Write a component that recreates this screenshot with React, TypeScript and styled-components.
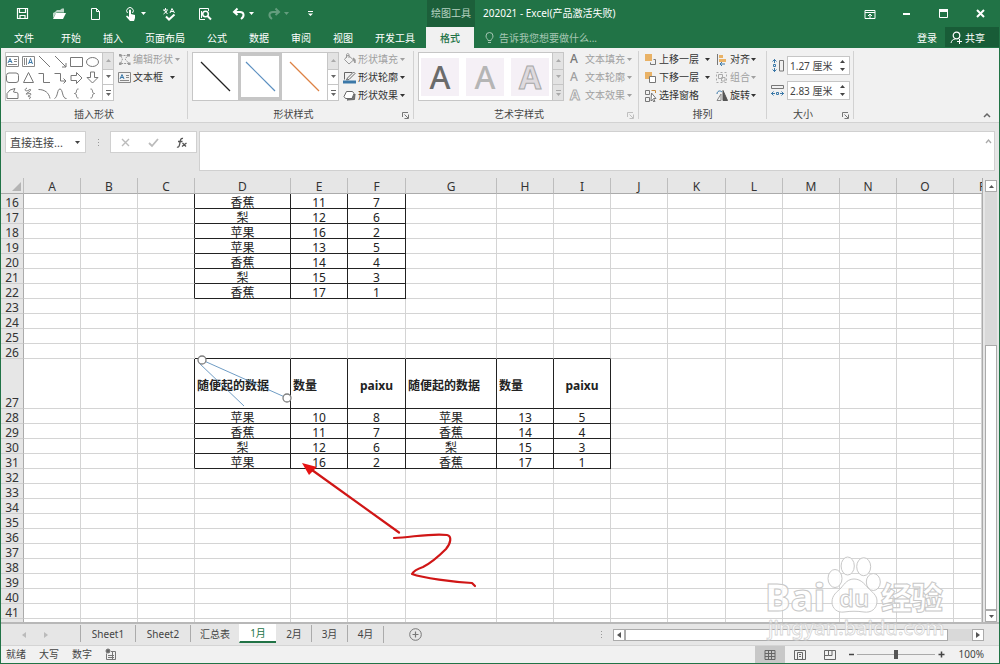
import React from "react";
import styled, { createGlobalStyle } from "styled-components";

const green = "#217346";
const blue = "#3b78a8";

const GlobalStyle = createGlobalStyle`
  * { box-sizing: border-box; }
  body {
    margin: 0;
    font-family: "Noto Sans", "Noto Sans CJK SC", sans-serif;
    font-size: 10px;
    color: #444;
  }
  button, input, textarea { font: inherit; color: inherit; margin: 0; padding: 0; }
  button { border: 0; background: none; white-space: nowrap; }
  svg { display: block; flex: none; }
`;

const Window = styled.div`
  position: relative;
  display: flex;
  flex-direction: column;
  height: 100vh;
  overflow: hidden;
  background: #e6e6e6;
  border: 1px solid ${green};
  border-top: 0;
`;

/* ---------- title bar and menu ---------- */

const TitleBar = styled.header`
  display: flex;
  flex: none;
  height: 27px;
  background: ${green};
  color: #fff;
`;

const QuickAccess = styled.div`
  display: flex;
  flex: none;
  width: 426px;
  padding-left: 3px;
`;

const QuickButton = styled.button<{ $w: number; $dim?: boolean }>`
  display: flex;
  align-items: center;
  justify-content: center;
  gap: 3px;
  width: ${(p) => p.$w}px;
  opacity: ${(p) => (p.$dim ? 0.3 : 1)};
`;

const ContextTitle = styled.div`
  flex: none;
  width: 48px;
  line-height: 27px;
  text-align: center;
  background: #1c5f3a;
  color: #b6d3c2;
`;

const DocTitle = styled.h1`
  flex: 1;
  margin: 0;
  padding-left: 8px;
  font-size: 10px;
  font-weight: 400;
  line-height: 27px;
`;

const WindowButton = styled.button`
  display: flex;
  align-items: center;
  justify-content: center;
  width: 37px;
`;

const MenuBar = styled.nav`
  display: flex;
  flex: none;
  height: 21px;
  background: ${green};
  color: #fff;
`;

const MenuTab = styled.button<{ $active?: boolean; $pad?: string }>`
  padding: ${(p) => p.$pad || "0 11px"};
  line-height: 20px;
  background: ${(p) => (p.$active ? "#f1f1f1" : "transparent")};
  color: ${(p) => (p.$active ? green : "#fff")};
  font-weight: ${(p) => (p.$active ? 500 : 400)};
`;

const TellMe = styled.label`
  display: flex;
  flex: 1;
  align-items: center;
  gap: 5px;
  padding-left: 11px;
`;

const TellMeInput = styled.input`
  width: 160px;
  border: 0;
  background: none;
  &::placeholder { color: #a6c7b4; opacity: 1; }
`;

const ShareButton = styled.button`
  display: flex;
  align-items: center;
  gap: 2px;
  width: 54px;
  height: 20px;
  padding-left: 5px;
  background: #185c37;
`;

/* ---------- ribbon ---------- */

const Ribbon = styled.section`
  display: flex;
  flex: none;
  height: 75px;
  background: #f1f1f1;
  border-bottom: 1px solid #d2d2d2;
`;

const Group = styled.div<{ $w: number }>`
  display: flex;
  flex: none;
  flex-direction: column;
  width: ${(p) => p.$w}px;
  padding-top: 2px;
`;

const Divider = styled.div`
  flex: none;
  width: 1px;
  height: 68px;
  margin-top: 3px;
  background: #d2d2d2;
`;

const GroupBody = styled.div`
  display: flex;
  flex: none;
  height: 56px;
  padding-left: 4px;
`;

const GroupFooter = styled.div`
  display: flex;
  align-items: center;
  height: 16px;
`;

const GroupName = styled.span`
  flex: 1;
  text-align: center;
  line-height: 16px;
`;

const Launcher = styled.button<{ $dim?: boolean }>`
  width: 14px;
  height: 10px;
  padding-left: 2px;
  opacity: ${(p) => (p.$dim ? 0.4 : 1)};
`;

const Gallery = styled.div<{ $w: number }>`
  display: flex;
  flex: none;
  width: ${(p) => p.$w}px;
  height: 49px;
  margin-top: 2px;
  background: #fff;
  border: 1px solid #c6c6c6;
`;

const GalleryItems = styled.div`
  display: flex;
  flex: 1;
`;

const ShapeGrid = styled.div`
  display: grid;
  flex: 1;
  grid-template-columns: repeat(6, 16px);
  grid-template-rows: repeat(3, 16px);
`;

const ShapeButton = styled.button`
  display: flex;
  align-items: center;
`;

const GalleryScroll = styled.div`
  display: grid;
  width: 11px;
  grid-template-rows: repeat(3, 1fr);
`;

const ScrollStep = styled.button<{ $off?: boolean }>`
  display: flex;
  align-items: center;
  justify-content: center;
  border-left: 1px solid #c6c6c6;
  background: ${(p) => (p.$off ? "#e3e3e3" : "#fff")};
  color: ${(p) => (p.$off ? "#aaa" : "#666")};
  & + & { border-top: 1px solid #c6c6c6; }
`;

const LineStyle = styled.button<{ $selected?: boolean }>`
  display: flex;
  flex: 1;
  align-items: center;
  justify-content: center;
  border: 3px solid ${(p) => (p.$selected ? "#c6c6c6" : "transparent")};
`;

const WordArtRow = styled(GalleryItems)`
  align-items: center;
  gap: 7px;
  padding-left: 2px;
`;

const WordArtTile = styled.button`
  display: flex;
  align-items: center;
  justify-content: center;
  width: 38px;
  height: 38px;
  background: #f5f0f6;
`;

const LetterA = styled.span<{ $size: number; $fill: string; $stroke?: string; $bold?: boolean }>`
  font-size: ${(p) => p.$size}px;
  line-height: 1;
  font-weight: ${(p) => (p.$bold ? 700 : 500)};
  color: ${(p) => p.$fill};
  -webkit-text-stroke: ${(p) => (p.$stroke ? `1px ${p.$stroke}` : "0")};
`;

const CommandList = styled.div<{ $w: number; $left: number }>`
  display: flex;
  flex: none;
  flex-direction: column;
  width: ${(p) => p.$w}px;
  margin-left: ${(p) => p.$left}px;
`;

const CommandButton = styled.button<{ $off?: boolean; $w?: number }>`
  display: flex;
  align-items: center;
  width: ${(p) => (p.$w ? `${p.$w}px` : "auto")};
  height: 18px;
  line-height: 18px;
  color: ${(p) => (p.$off ? "#a0a0a0" : "#333")};
`;

const CommandIcon = styled.span`
  display: flex;
  justify-content: flex-start;
  width: 14px;
  margin-right: 1px;
`;

const CommandText = styled.span`
  flex: 1;
  text-align: left;
`;

const SizeFields = styled.div`
  display: flex;
  flex-direction: column;
  gap: 6px;
  padding-top: 6px;
`;

const SizeField = styled.label`
  display: flex;
  align-items: center;
  gap: 3px;
  height: 19px;
`;

const SizeBox = styled.span`
  display: flex;
  align-items: center;
  width: 63px;
  height: 19px;
  background: #fff;
  border: 1px solid #c6c6c6;
`;

const SizeInput = styled.input`
  flex: 1;
  min-width: 0;
  padding-left: 2px;
  border: 0;
  background: none;
`;

const Spinner = styled.span`
  display: flex;
  flex-direction: column;
  gap: 4px;
  width: 9px;
`;

const SpinButton = styled.button`
  display: block;
  width: 6px;
  height: 4px;
`;

const RibbonEnd = styled.div`
  display: flex;
  flex: 1;
  align-items: flex-end;
  justify-content: flex-end;
  padding: 0 8px 2px 0;
`;

/* ---------- formula bar ---------- */

const FormulaBar = styled.section`
  display: flex;
  flex: none;
  height: 55px;
  padding: 8px 4px 7px 4px;
`;

const NameBox = styled.div`
  display: flex;
  align-items: center;
  width: 81px;
  height: 22px;
  padding: 0 5px 0 4px;
  background: #fff;
  border: 1px solid #d0d0d0;
`;

const NameInput = styled.input`
  flex: 1;
  min-width: 0;
  border: 0;
  font-size: 11px;
`;

const Grip = styled.div`
  display: flex;
  flex-direction: column;
  align-items: center;
  justify-content: center;
  gap: 2px;
  width: 24px;
  height: 22px;
  &::before, &::after { content: ""; width: 1px; height: 1px; background: #999; }
`;

const GripDot = styled.i`
  width: 1px;
  height: 1px;
  background: #999;
`;

const FormulaButtons = styled.div`
  display: flex;
  flex: none;
  width: 87px;
  height: 22px;
  background: #fff;
  border: 1px solid #d0d0d0;
`;

const FormulaButton = styled.button`
  display: flex;
  flex: 1;
  align-items: center;
  justify-content: center;
`;

const FormulaField = styled.div`
  display: flex;
  flex: 1;
  height: 40px;
  margin-left: 2px;
  padding: 6px 2px 0 0;
  background: #fff;
  border: 1px solid #d0d0d0;
`;

const FormulaInput = styled.textarea`
  flex: 1;
  height: 30px;
  border: 0;
  resize: none;
  font-size: 12px;
`;

/* ---------- sheet ---------- */

const Workspace = styled.main`
  display: flex;
  flex: 1;
  min-height: 0;
`;

const SheetView = styled.div`
  position: relative;
  flex: 1;
  overflow: hidden;
  border-right: 1px solid #ababab;
`;

const Grid = styled.table`
  width: 100%;
  table-layout: fixed;
  border-collapse: separate;
  border-spacing: 0;
  font-size: 12px;
  line-height: 11px;
  background: #fff;
`;

const HeadRow = styled.tr`
  height: 16px;
`;

const ColHead = styled.th`
  height: 16px;
  padding: 2px 0 0;
  font-weight: 400;
  color: #333;
  background: #e6e6e6;
  border-right: 1px solid #bdbdbd;
  border-bottom: 1px solid #ababab;
  white-space: nowrap;
`;

const CornerHead = styled(ColHead)`
  padding-left: 10px;
`;

const EdgeHead = styled(ColHead)`
  padding-left: 25px;
  text-align: left;
  border-right: 0;
`;

const RowHead = styled.th<{ $h: number }>`
  height: ${(p) => p.$h}px;
  padding: 3px 0 0;
  font-weight: 400;
  vertical-align: bottom;
  color: #333;
  background: #e6e6e6;
  border-right: 1px solid #ababab;
  border-bottom: 1px solid #cfcfcf;
`;

const Cell = styled.td<{ $right: boolean; $bottom: boolean; $bold?: boolean; $align?: string }>`
  padding: 3px 2px 0;
  white-space: nowrap;
  color: #222;
  text-align: ${(p) => p.$align || "center"};
  vertical-align: middle;
  font-weight: ${(p) => (p.$bold ? 700 : 400)};
  border-right: 1px solid ${(p) => (p.$right ? "#222" : "#d4d4d4")};
  border-bottom: 1px solid ${(p) => (p.$bottom ? "#222" : "#d4d4d4")};
`;

const Drawing = styled.svg`
  position: absolute;
  top: 0;
  left: 0;
  pointer-events: none;
`;

const VScroll = styled.div`
  display: flex;
  flex: none;
  flex-direction: column;
  width: 16px;
  padding: 2px 2px 0;
`;

const ArrowButton = styled.button`
  display: flex;
  flex: none;
  align-items: center;
  justify-content: center;
  width: 12px;
  height: 12px;
  background: #fff;
  border: 1px solid #ababab;
  color: #555;
`;

const VTrack = styled.div`
  flex: 154;
  background: #d9d9d9;
`;

const VThumb = styled.div`
  flex: 266;
  background: #fff;
  border: 1px solid #ababab;
`;

/* ---------- sheet tabs ---------- */

const TabBar = styled.section`
  display: flex;
  flex: none;
  align-items: center;
  height: 24px;
  border-top: 2px solid #b8b8b8;
  border-bottom: 1px solid #d4d4d4;
`;

const TabNav = styled.div`
  display: flex;
  align-items: center;
  gap: 18px;
  width: 79px;
  padding-left: 21px;
`;

const NavButton = styled.button`
  display: flex;
  color: #bbb;
`;

const SheetTabs = styled.div`
  display: flex;
  align-self: flex-start;
  height: 19px;
  padding-top: 1px;
`;

const SheetTab = styled.button<{ $w: number; $active?: boolean; $plainLeft?: boolean }>`
  width: ${(p) => p.$w}px;
  height: ${(p) => (p.$active ? 19 : 17)}px;
  margin-top: ${(p) => (p.$active ? -1 : 0)}px;
  line-height: 16px;
  background: ${(p) => (p.$active ? "#fff" : "transparent")};
  color: ${(p) => (p.$active ? green : "#444")};
  border-left: 1px solid ${(p) => (p.$active || p.$plainLeft ? "transparent" : "#ababab")};
  border-bottom: ${(p) => (p.$active ? `2px solid ${green}` : "0")};
`;

const TabEnd = styled.div`
  flex: 1;
  padding-left: 25px;
  height: 17px;
  border-left: 1px solid #ababab;
`;

const AddSheet = styled.button`
  display: flex;
  padding-top: 2px;
`;

const HScroll = styled.div`
  display: flex;
  flex: none;
  width: 371px;
  height: 12px;
  margin-right: 15px;
`;

const HThumb = styled.div`
  flex: 322;
  background: #fff;
  border: 1px solid #ababab;
`;

const HTrack = styled.div`
  flex: 24;
  background: #d9d9d9;
`;

/* ---------- status bar ---------- */

const StatusBar = styled.footer`
  display: flex;
  flex: none;
  align-items: center;
  height: 17px;
  padding: 0 15px 0 5px;
  background: #f1f1f1;
`;

const StatusItems = styled.div`
  display: flex;
  flex: 1;
  align-items: center;
  gap: 13px;
  line-height: 14px;
  padding-bottom: 2px;
`;

const ViewButton = styled.button<{ $active?: boolean }>`
  display: flex;
  align-items: center;
  justify-content: center;
  width: 30px;
  height: 17px;
  background: ${(p) => (p.$active ? "#c8c8c8" : "transparent")};
`;

const ZoomButton = styled.button`
  display: flex;
  align-items: center;
  justify-content: center;
  width: 12px;
  height: 16px;
`;

const ZoomSlider = styled.input`
  appearance: none;
  width: 78px;
  height: 16px;
  background: linear-gradient(#aaa, #aaa) center / 100% 1px no-repeat;
  &::-webkit-slider-thumb {
    appearance: none;
    width: 4px;
    height: 9px;
    background: #555;
  }
`;

const ZoomValue = styled.span`
  width: 37px;
  line-height: 14px;
  padding-bottom: 2px;
  text-align: right;
`;

const Watermark = styled.svg`
  position: absolute;
  right: 51px;
  bottom: 22px;
  pointer-events: none;
`;

/* ---------- glyphs ---------- */

const Glyph = ({ d, s = 13, c = "currentColor", w = 1, fill = "none", children }: {
  d?: string; s?: number; c?: string; w?: number; fill?: string; children?: React.ReactNode;
}) => (
  <svg width={s} height={s} viewBox={`0 0 ${s} ${s}`} fill={fill} stroke={c} strokeWidth={w} aria-hidden="true">
    {d && <path d={d} />}
    {children}
  </svg>
);

const Caret = ({ up }: { up?: boolean }) => (
  <svg width="5" height="3" viewBox="0 0 5 3" fill="currentColor" aria-hidden="true">
    <path d={up ? "M0 3L2.5 0L5 3Z" : "M0 0H5L2.5 3Z"} />
  </svg>
);

const SideCaret = ({ left }: { left?: boolean }) => (
  <svg width="4" height="6" viewBox="0 0 4 6" fill="currentColor" aria-hidden="true">
    <path d={left ? "M4 0V6L0 3Z" : "M0 0V6L4 3Z"} />
  </svg>
);

const MoreCaret = () => (
  <svg width="7" height="6" viewBox="0 0 7 6" fill="currentColor" aria-hidden="true">
    <path d="M1 0H6V1H1ZM1 3H6L3.5 6Z" />
  </svg>
);

const TextBoxGlyph = ({ vertical }: { vertical?: boolean }) => (
  <Glyph c="#888">
    <path d="M.5 1.5H12.5V11.5H.5Z" />
    {vertical ? (
      <>
        <path d="M2.5 3V10M4.5 3V10" />
        <path d="M6.5 9L8.5 3.5L10.5 9M7 7.5H10" stroke={blue} />
      </>
    ) : (
      <>
        <path d="M2 8L4 3.5L6 8M3 6.5H5.5" stroke={blue} />
        <path d="M8 4.5H11M8 6.5H11M2 9.5H11" />
      </>
    )}
  </Glyph>
);

const shapes: [string, React.ReactNode][] = [
  ["文本框", <TextBoxGlyph />],
  ["竖排文本框", <TextBoxGlyph vertical />],
  ["直线", <Glyph c="#777" d="M1 1L12 12" />],
  ["箭头", <Glyph c="#777" d="M1 1L12 12M12 8V12H8" />],
  ["矩形", <Glyph c="#777" d="M.5 2.5H12.5V11.5H.5Z" />],
  ["椭圆", <Glyph c="#777"><ellipse cx="6.5" cy="7" rx="6" ry="4.5" /></Glyph>],
  ["圆角矩形", <Glyph c="#777"><rect x=".5" y="2" width="12" height="9.5" rx="2.5" /></Glyph>],
  ["三角形", <Glyph c="#777" d="M6.5 1.5L11.5 11.5H1.5Z" />],
  ["肘形连接符", <Glyph c="#777" d="M.5 2.5H5.5V11.5H12" />],
  ["肘形箭头", <Glyph c="#777" d="M.5 2.5H6.5V10H12M9.5 7.5L12 10L9.5 12.5" />],
  ["右箭头", <Glyph c="#777" d="M1 4.5H6.5V1.5L12 7L6.5 12.5V9.5H1Z" />],
  ["下箭头", <Glyph c="#777" d="M4.5 1H8.5V6.5H12L6.5 12L1 6.5H4.5Z" />],
  ["任意多边形", <Glyph c="#777" d="M4 3L9 1.5L7.5 5C9 6 12 4.5 12 7V11.5H1V6.5Z" />],
  ["自由曲线", <Glyph c="#777" d="M5 1C1 3 4 5 7 3C9 1 10 4 5 6C2 9 8 5 9 7C9 9 4 8 7 10C9 9 9 11 7 12" />],
  ["弧形", <Glyph c="#777" d="M.5 2.5C7 2.5 11 6 12 11.5" />],
  ["曲线", <Glyph c="#777" d="M.5 11.5C4 10 3 2 6 2C9 2 8 12 12.5 11.5" />],
  ["左大括号", <Glyph c="#777" d="M8.5 2C5 2 8 6 4.5 6.5C8 7 5 11 8.5 11" />],
  ["右大括号", <Glyph c="#777" d="M4.5 2C8 2 5 6 8.5 6.5C5 7 8 11 4.5 11" />],
];

const Steps = ({ off }: { off?: boolean }) => (
  <GalleryScroll>
    <ScrollStep $off aria-label="上一行"><Caret up /></ScrollStep>
    <ScrollStep $off={off} aria-label="下一行"><Caret /></ScrollStep>
    <ScrollStep $off={off} aria-label="其他"><MoreCaret /></ScrollStep>
  </GalleryScroll>
);

const Command = ({ icon, text, off, w, caret = true }: {
  icon: React.ReactNode; text: string; off?: boolean; w?: number; caret?: boolean;
}) => (
  <CommandButton $off={off} $w={w}>
    <CommandIcon>{icon}</CommandIcon>
    <CommandText>{text}</CommandText>
    {caret && <Caret />}
  </CommandButton>
);

const Footer = ({ name, launcher, dim }: { name: string; launcher?: boolean; dim?: boolean }) => (
  <GroupFooter>
    <GroupName>{name}</GroupName>
    {launcher && (
      <Launcher $dim={dim} aria-label={`${name}设置`}>
        <Glyph s={9} c="#777" d="M1.5 7V2.5H7M3.5 4.5L7 8M7.5 4.5V8.5H3.5" />
      </Launcher>
    )}
  </GroupFooter>
);

const SizeControl = ({ icon, name, value }: { icon: React.ReactNode; name: string; value: string }) => (
  <SizeField>
    {icon}
    <SizeBox>
      <SizeInput defaultValue={value} aria-label={name} />
      <Spinner>
        <SpinButton aria-label={`增大${name}`}><Caret up /></SpinButton>
        <SpinButton aria-label={`减小${name}`}><Caret /></SpinButton>
      </Spinner>
    </SizeBox>
  </SizeField>
);

/* ---------- sheet data ---------- */

const columns = "ABCDEFGHIJKLMNO".split("");
const columnWidths = [57, 57, 57, 96, 57, 58, 91, 57, 57, 57, 58, 57, 57, 57, 57];
const firstRow = 16;
const lastRow = 41;

const data: Record<number, string[]> = {
  16: ["香蕉", "11", "7"],
  17: ["梨", "12", "6"],
  18: ["苹果", "16", "2"],
  19: ["苹果", "13", "5"],
  20: ["香蕉", "14", "4"],
  21: ["梨", "15", "3"],
  22: ["香蕉", "17", "1"],
  27: ["随便起的数据", "数量", "paixu", "随便起的数据", "数量", "paixu"],
  28: ["苹果", "10", "8", "苹果", "13", "5"],
  29: ["香蕉", "11", "7", "香蕉", "14", "4"],
  30: ["梨", "12", "6", "梨", "15", "3"],
  31: ["苹果", "16", "2", "香蕉", "17", "1"],
};

const cellAt = (row: number, col: number): string | undefined => data[row]?.[col - 3];
const rows = Array.from({ length: lastRow - firstRow + 2 }, (_, i) => firstRow + i);

const SheetRow = ({ row }: { row: number }) => (
  <tr>
    <RowHead scope="row" $h={row === 27 ? 50 : 15}>{row <= lastRow ? row : null}</RowHead>
    {[...columns, "P"].map((name, col) => {
      const text = cellAt(row, col);
      return (
        <Cell
          key={name}
          $right={text !== undefined || cellAt(row, col + 1) !== undefined}
          $bottom={text !== undefined || cellAt(row + 1, col) !== undefined}
          $bold={row === 27}
          $align={row === 27 && text !== "paixu" ? "left" : "center"}
        >
          {text}
        </Cell>
      );
    })}
  </tr>
);

const menuTabs = ["开始", "插入", "页面布局", "公式", "数据", "审阅", "视图", "开发工具"];
const orange = "#e9b266";
const layerFront = <Glyph><path d="M1 1H8V8H1Z" fill={orange} stroke="none" /><path d="M9.5 6.5H11.5V11.5H6.5V9.5" stroke="#777" /></Glyph>;
const layerBack = <Glyph><path d="M1 1H8V8H1Z" fill={orange} stroke="none" /><path d="M5.5 5.5H11.5V11.5H5.5Z" stroke="#777" fill="#fff" /></Glyph>;

export default function App() {
  return (
    <Window>
      <GlobalStyle />
      <TitleBar>
        <QuickAccess>
          <QuickButton $w={36} aria-label="保存">
            <Glyph c="#fff" d="M1.5 1.5H11.5V11.5H1.5ZM3.5 2V5.5H9.5V2M4 11V8.5H9V11" w={1.2} />
          </QuickButton>
          <QuickButton $w={38} aria-label="打开">
            <Glyph c="none" fill="#fff" s={14}><path d="M3 5L5 3H8L10 1.5H12V5.5H4.5L1 11V6Z" opacity=".7" /><path d="M4 6H14L11 12H1Z" /></Glyph>
          </QuickButton>
          <QuickButton $w={34} aria-label="新建">
            <Glyph c="#fff" d="M2.5 1.5H7.5L10.5 4.5V12.5H2.5ZM7.5 1.5V4.5H10.5" />
          </QuickButton>
          <QuickButton $w={46} aria-label="触摸/鼠标模式">
            <Glyph s={14} c="none" fill="#fff">
              <path d="M5 3.5A1 1 0 0 1 7 3.5V7L11 8V11L10 14H6L2 9.5L3 8.5L5 10Z" />
              <path d="M3.5 6A3.3 3.3 0 1 1 8.5 6" stroke="#fff" fill="none" />
            </Glyph>
            <Caret />
          </QuickButton>
          <QuickButton $w={22} aria-label="拼写检查">
            <Glyph s={14} c="#fff" d="M1 3H6M3.5 1V3M2 3L5.5 7M5 4L1.5 7M8 6L10 1.5L12.5 6M9 4.5H12">
              <path d="M4 9.5L7 12.5L12.5 7.5" strokeWidth="2" />
            </Glyph>
          </QuickButton>
          <QuickButton $w={50} aria-label="打印预览">
            <Glyph s={14} c="#fff" d="M10.5 4V1.5H1.5V12.5H7M3.5 4V11">
              <circle cx="7.5" cy="7" r="2.8" strokeWidth="1.5" />
              <path d="M9.5 9L13 12.5" strokeWidth="2" />
            </Glyph>
          </QuickButton>
          <QuickButton $w={26} aria-label="撤消">
            <Glyph s={14} c="#fff" d="M5.5 1.5L2 5L5.5 8M2.5 5H8C12 5 13 9 9 12" w={2} />
            <Caret />
          </QuickButton>
          <QuickButton $w={44} $dim aria-label="恢复">
            <Glyph s={14} c="#fff" d="M8.5 1.5L12 5L8.5 8M11.5 5H6C2 5 1 9 5 12" w={2} />
            <Caret />
          </QuickButton>
          <QuickButton $w={20} aria-label="自定义快速访问工具栏">
            <Glyph s={7} c="none" fill="#fff" d="M1 1H6V2H1ZM1 3.5H6L3.5 6Z" />
          </QuickButton>
        </QuickAccess>
        <ContextTitle>绘图工具</ContextTitle>
        <DocTitle>202021 - Excel(产品激活失败)</DocTitle>
        <WindowButton aria-label="功能区显示选项">
          <Glyph s={12} c="#fff" d="M1 2.5H11V10.5H1ZM1 4.5H11M6 10V6M4 8L6 6L8 8" />
        </WindowButton>
        <WindowButton aria-label="最小化"><Glyph s={9} c="#fff" d="M1 5H8" w={2} /></WindowButton>
        <WindowButton aria-label="最大化"><Glyph s={9} c="#fff" d="M.5 1V8.5H8.5V1"><path d="M0 1.5H9" strokeWidth="3" /></Glyph></WindowButton>
        <WindowButton aria-label="关闭"><Glyph s={9} c="#fff" d="M1 1L8 8M8 1L1 8" w={2} /></WindowButton>
      </TitleBar>

      <MenuBar>
        <MenuTab $pad="0 16px 0 13px">文件</MenuTab>
        {menuTabs.map((name) => <MenuTab key={name}>{name}</MenuTab>)}
        <MenuTab $active $pad="0 14px">格式</MenuTab>
        <TellMe>
          <svg width="9" height="12" viewBox="0 0 9 12" fill="none" stroke="#a6c7b4" aria-hidden="true">
            <path d="M3 8.5C3 7 1 6.5 1 4A3.5 3.5 0 0 1 8 4C8 6.5 6 7 6 8.5ZM3 10.5H6" />
          </svg>
          <TellMeInput placeholder="告诉我您想要做什么..." aria-label="操作说明搜索" />
        </TellMe>
        <MenuTab $pad="0 8px">登录</MenuTab>
        <ShareButton>
          <Glyph c="#fff" d="M1 12C1.5 9.5 3 8 5.5 8M9.5 8V13M7 10.5H12">
            <circle cx="6.5" cy="4.5" r="3.3" strokeWidth="1.2" />
          </Glyph>
          共享
        </ShareButton>
      </MenuBar>

      <Ribbon>
        <Group $w={186}>
          <GroupBody>
            <Gallery $w={109}>
              <ShapeGrid>
                {shapes.map(([name, glyph]) => <ShapeButton key={name} aria-label={name}>{glyph}</ShapeButton>)}
              </ShapeGrid>
              <Steps />
            </Gallery>
            <CommandList $w={62} $left={4}>
              <Command off text="编辑形状" icon={
                <Glyph c="#999"><path d="M2.5 2.5H10L7 6L11 10.5H2.5L4.5 6Z" strokeDasharray="2 1" /><path d="M1 1H3.5V3.5H1ZM9 1H12V3.5H9ZM1 9.5H3.5V12H1ZM10 9.5H12.5V12H10Z" fill="#999" stroke="none" /></Glyph>
              } />
              <Command w={57} text="文本框" icon={<TextBoxGlyph />} />
            </CommandList>
          </GroupBody>
          <Footer name="插入形状" />
        </Group>
        <Divider />
        <Group $w={225}>
          <GroupBody>
            <Gallery $w={147}>
              <GalleryItems>
                {["#222", "#5b8fc0", "#dd8244"].map((color, i) => (
                  <LineStyle key={color} $selected={i === 1} aria-label={`线条样式 ${i + 1}`}>
                    <Glyph s={31} c={color} d="M1 1L30 30" w={1.2} />
                  </LineStyle>
                ))}
              </GalleryItems>
              <Steps />
            </Gallery>
            <CommandList $w={62} $left={4}>
              <Command off text="形状填充" icon={
                <Glyph c="#999" d="M5 2L10.5 7L6 11L1.5 6.5ZM3.5 5V2C3.5 0 6 0 6 2V5"><path d="M10.5 5C12.5 6 12.5 8 12 10L10.5 7Z" fill="#999" /></Glyph>
              } />
              <Command text="形状轮廓" icon={
                <Glyph c="#666" d="M9 1.5H1.5V8.5M4.5 7L10.5 1L12 2.5L6 8.5L3.5 9Z"><path d="M0 11H13" stroke={blue} strokeWidth="3" /></Glyph>
              } />
              <Command text="形状效果" icon={
                <Glyph c="#666"><path d="M4 11L11.5 10.5L12 5L10 8Z" fill="#777" /><path d="M3.5 2.5H9.5L11 4.5L9 9.5H2.5L1 7.5Z" fill="#fff" strokeLinejoin="round" /></Glyph>
              } />
            </CommandList>
          </GroupBody>
          <Footer name="形状样式" launcher />
        </Group>
        <Divider />
        <Group $w={224}>
          <GroupBody>
            <Gallery $w={146}>
              <WordArtRow>
                <WordArtTile aria-label="艺术字样式 1"><LetterA $size={32} $fill="#6b6b6b">A</LetterA></WordArtTile>
                <WordArtTile aria-label="艺术字样式 2"><LetterA $size={32} $fill="#b5b5b5">A</LetterA></WordArtTile>
                <WordArtTile aria-label="艺术字样式 3"><LetterA $size={32} $bold $fill="#dedade" $stroke="#a8a8a8">A</LetterA></WordArtTile>
              </WordArtRow>
              <Steps off />
            </Gallery>
            <CommandList $w={62} $left={6}>
              <Command off text="文本填充" icon={<LetterA $size={12} $fill="#777">A</LetterA>} />
              <Command off text="文本轮廓" icon={<LetterA $size={12} $fill="#a0a0a0">A</LetterA>} />
              <Command off text="文本效果" icon={<LetterA $size={14} $bold $fill="#fff" $stroke="#aaa">A</LetterA>} />
            </CommandList>
          </GroupBody>
          <Footer name="艺术字样式" launcher dim />
        </Group>
        <Divider />
        <Group $w={127}>
          <GroupBody>
            <CommandList $w={66} $left={1}>
              <Command text="上移一层" icon={layerFront} />
              <Command text="下移一层" icon={layerBack} />
              <Command text="选择窗格" caret={false} icon={
                <Glyph c="#777" d="M1.5 1.5H5.5V5.5H1.5ZM1.5 8.5H5.5V12.5H1.5Z"><path d="M7.5 1.5H11.5V4" stroke="#c98b3a" /><path d="M7.5 4L12 9.5H9.5L11 12.5L9.8 13L8.5 10.5L7 12Z" fill="#fff" /></Glyph>
              } />
            </CommandList>
            <CommandList $w={41} $left={5}>
              <Command text="对齐" icon={
                <Glyph><path d="M2.5 1V12" stroke="#777" /><path d="M4 2H8V5H4ZM4 6H11V9H4Z" fill={orange} stroke="none" /><path d="M10 11H5M7 9L5 11L7 13" stroke={blue} /></Glyph>
              } />
              <Command off text="组合" icon={
                <Glyph c="#aaa"><path d="M1.5 1.5H11.5V11.5H1.5Z" strokeDasharray="2 2" /><path d="M3.5 3.5H7.5V7.5H3.5ZM6.5 6.5H10V10H6.5Z" /></Glyph>
              } />
              <Command text="旋转" icon={
                <Glyph><path d="M8 1.5V11.5H12.5Z" fill="#555" stroke="#555" /><path d="M6 5V11.5H2Z" stroke="#888" /><path d="M2 5C2 2 5 1 7 3" stroke={blue} /></Glyph>
              } />
            </CommandList>
          </GroupBody>
          <Footer name="排列" />
        </Group>
        <Divider />
        <Group $w={86}>
          <GroupBody>
            <SizeFields>
              <SizeControl name="高度" value="1.27 厘米" icon={
                <Glyph c={blue} d="M3.5 0V4M1.5 2.5L3.5 .5L5.5 2.5M3.5 9V13M1.5 10.5L3.5 12.5L5.5 10.5M2.5 5.5H4.5V7.5H2.5Z"><path d="M8.5 1.5H12.5V12H8.5Z" stroke="#777" /></Glyph>
              } />
              <SizeControl name="宽度" value="2.83 厘米" icon={
                <Glyph c={blue} d="M0 9.5H4M2.5 7.5L.5 9.5L2.5 11.5M9 9.5H13M10.5 7.5L12.5 9.5L10.5 11.5M5.5 8.5H7.5V10.5H5.5Z"><path d="M.5 1.5H12.5V4.5H.5Z" stroke="#777" /></Glyph>
              } />
            </SizeFields>
          </GroupBody>
          <Footer name="大小" launcher />
        </Group>
        <Divider />
        <RibbonEnd>
          <button aria-label="折叠功能区"><Glyph s={8} c="#666" d="M1 5L4 2L7 5" w={1.5} /></button>
        </RibbonEnd>
      </Ribbon>

      <FormulaBar>
        <NameBox>
          <NameInput defaultValue="直接连接..." aria-label="名称框" />
          <button aria-label="名称列表"><Caret /></button>
        </NameBox>
        <Grip><GripDot /></Grip>
        <FormulaButtons>
          <FormulaButton aria-label="取消"><Glyph s={9} c="#bbb" d="M1 1L8 8M8 1L1 8" w={1.4} /></FormulaButton>
          <FormulaButton aria-label="输入"><Glyph s={11} c="#bbb" d="M1 6L4 9L10 2" w={1.8} /></FormulaButton>
          <FormulaButton aria-label="插入函数">
            <Glyph s={13} c="#555" d="M2 11C4 12 4.5 9 5 6.5C5.5 3.5 6 2 8 2.5M3 5.5H7.5M7.5 7L11 10.5M11.5 7L7 10.5" w={1.3} />
          </FormulaButton>
        </FormulaButtons>
        <FormulaField>
          <FormulaInput aria-label="编辑栏" />
          <Glyph s={7} c="#aaa" d="M1 5L3.5 2L6 5" w={1.3} />
        </FormulaField>
      </FormulaBar>

      <Workspace>
        <SheetView>
          <Grid>
            <colgroup>
              <col width={23} />
              {columnWidths.map((w, i) => <col key={columns[i]} width={w} />)}
              <col />
            </colgroup>
            <thead>
              <HeadRow>
                <CornerHead aria-label="全选">
                  <svg width="11" height="10" viewBox="0 0 11 10" fill="#b4b4b4" aria-hidden="true"><path d="M10 0V9H1Z" /></svg>
                </CornerHead>
                {columns.map((name) => <ColHead key={name} scope="col">{name}</ColHead>)}
                <EdgeHead scope="col">P</EdgeHead>
              </HeadRow>
            </thead>
            <tbody>
              {rows.map((row) => <SheetRow key={row} row={row} />)}
            </tbody>
          </Grid>
          <Drawing width="982" height="445" viewBox="1 178 982 445" fill="none" aria-hidden="true">
            <g stroke="#6f9cc4">
              <path d="M199 363L244 406" />
              <path d="M202 360L287 398" />
            </g>
            <g stroke="#7f7f7f" fill="#fff" strokeWidth="1.3">
              <circle cx="202" cy="360" r="4" />
              <circle cx="287" cy="398" r="4" />
            </g>
            <path d="M302 463L317 467L309 475Z" fill="#e81313" />
            <g stroke="#d01616" strokeWidth="2.2" strokeLinecap="round" strokeLinejoin="round">
              <path d="M312 470L399 532.5" />
              <path d="M394 538C413 537 433 533 447 535C452 536 451 543 446 549C440 555 433 562 423 567C417 569 413 572 412 574C423 578 453 582 472 583L475 586" />
            </g>
          </Drawing>
        </SheetView>
        <VScroll>
          <ArrowButton aria-label="向上滚动"><Caret up /></ArrowButton>
          <VTrack />
          <VThumb />
          <ArrowButton aria-label="向下滚动"><Caret /></ArrowButton>
        </VScroll>
      </Workspace>

      <TabBar>
        <TabNav>
          <NavButton aria-label="上一个工作表"><SideCaret left /></NavButton>
          <NavButton aria-label="下一个工作表"><SideCaret /></NavButton>
        </TabNav>
        <SheetTabs>
          <SheetTab $w={55}>Sheet1</SheetTab>
          <SheetTab $w={55}>Sheet2</SheetTab>
          <SheetTab $w={49}>汇总表</SheetTab>
          <SheetTab $w={37} $active>1月</SheetTab>
          <SheetTab $w={35} $plainLeft>2月</SheetTab>
          <SheetTab $w={36}>3月</SheetTab>
          <SheetTab $w={36}>4月</SheetTab>
        </SheetTabs>
        <TabEnd>
          <AddSheet aria-label="新工作表">
            <Glyph s={13} c="#777" d="M6.5 3.5V9.5M3.5 6.5H9.5" w={1.2}><circle cx="6.5" cy="6.5" r="5.8" strokeWidth="1" /></Glyph>
          </AddSheet>
        </TabEnd>
        <Grip><GripDot /></Grip>
        <HScroll>
          <ArrowButton aria-label="向左滚动"><SideCaret left /></ArrowButton>
          <HThumb />
          <HTrack />
          <ArrowButton aria-label="向右滚动"><SideCaret /></ArrowButton>
        </HScroll>
      </TabBar>

      <StatusBar>
        <StatusItems>
          <span>就绪</span>
          <span>大写</span>
          <span>数字</span>
          <Glyph s={12} c="#777" d="M1.5 5.5V11.5H10.5V3.5H6M3 7.5H9M3 9.5H9M7.5 3V11"><circle cx="3" cy="3" r="2" fill="#666" /></Glyph>
        </StatusItems>
        <ViewButton $active aria-label="普通"><Glyph s={12} c="#666" d="M1 1.5H11V10.5H1ZM1 4.5H11M1 7.5H11M4.5 1V11M7.5 1V11" /></ViewButton>
        <ViewButton aria-label="页面布局"><Glyph s={12} c="#666" d="M.5 1.5H11.5V10.5H.5ZM3.5 3.5H8.5V10M3.5 3.5V10M5 5.5H7M5 7.5H7" /></ViewButton>
        <ViewButton aria-label="分页预览"><Glyph s={12} c="#666" d="M.5 1.5H11.5V10.5H.5ZM4.5 1V6.5H1M4.5 6.5H8V1" /></ViewButton>
        <ZoomButton aria-label="缩小"><Glyph s={7} c="#444" d="M1 3.5H6" w={1.5} /></ZoomButton>
        <ZoomSlider type="range" min="0" max="100" defaultValue="50" aria-label="缩放" />
        <ZoomButton aria-label="放大"><Glyph s={7} c="#444" d="M.5 3.5H6.5M3.5 .5V6.5" w={1.5} /></ZoomButton>
        <ZoomValue>100%</ZoomValue>
      </StatusBar>

      <Watermark width="185" height="88" viewBox="763 553 185 88" fill="#fff" fillOpacity=".8" stroke="#c8c8c8" aria-hidden="true">
        <ellipse cx="835" cy="578.5" rx="7" ry="9" />
        <ellipse cx="847.7" cy="566" rx="6.6" ry="9" />
        <ellipse cx="863.7" cy="566.7" rx="7" ry="9" />
        <ellipse cx="873.3" cy="582" rx="7" ry="8.5" />
        <path d="M854 579C848 579 845 583 841 588C837 592 832 595 832 602C832 609 838 613 844 612C851 611 857 611 864 612C871 613 877 609 877 601C877 595 872 592 868 588C864 583 860 579 854 579Z" />
        <text x="765" y="611" fontSize="38" fontWeight="800" fontFamily="Noto Sans">Bai</text>
        <text x="839" y="607" fontSize="24" fontWeight="600" fontFamily="Noto Sans">du</text>
        <text x="881" y="609" fontSize="31" fontWeight="900" fontFamily="Noto Sans CJK SC">经验</text>
        <text x="768" y="635" fontSize="20" fontWeight="500" fontFamily="Noto Sans" strokeWidth=".8" stroke="#d4d4d4">jingyan.baidu.com</text>
      </Watermark>
    </Window>
  );
}
